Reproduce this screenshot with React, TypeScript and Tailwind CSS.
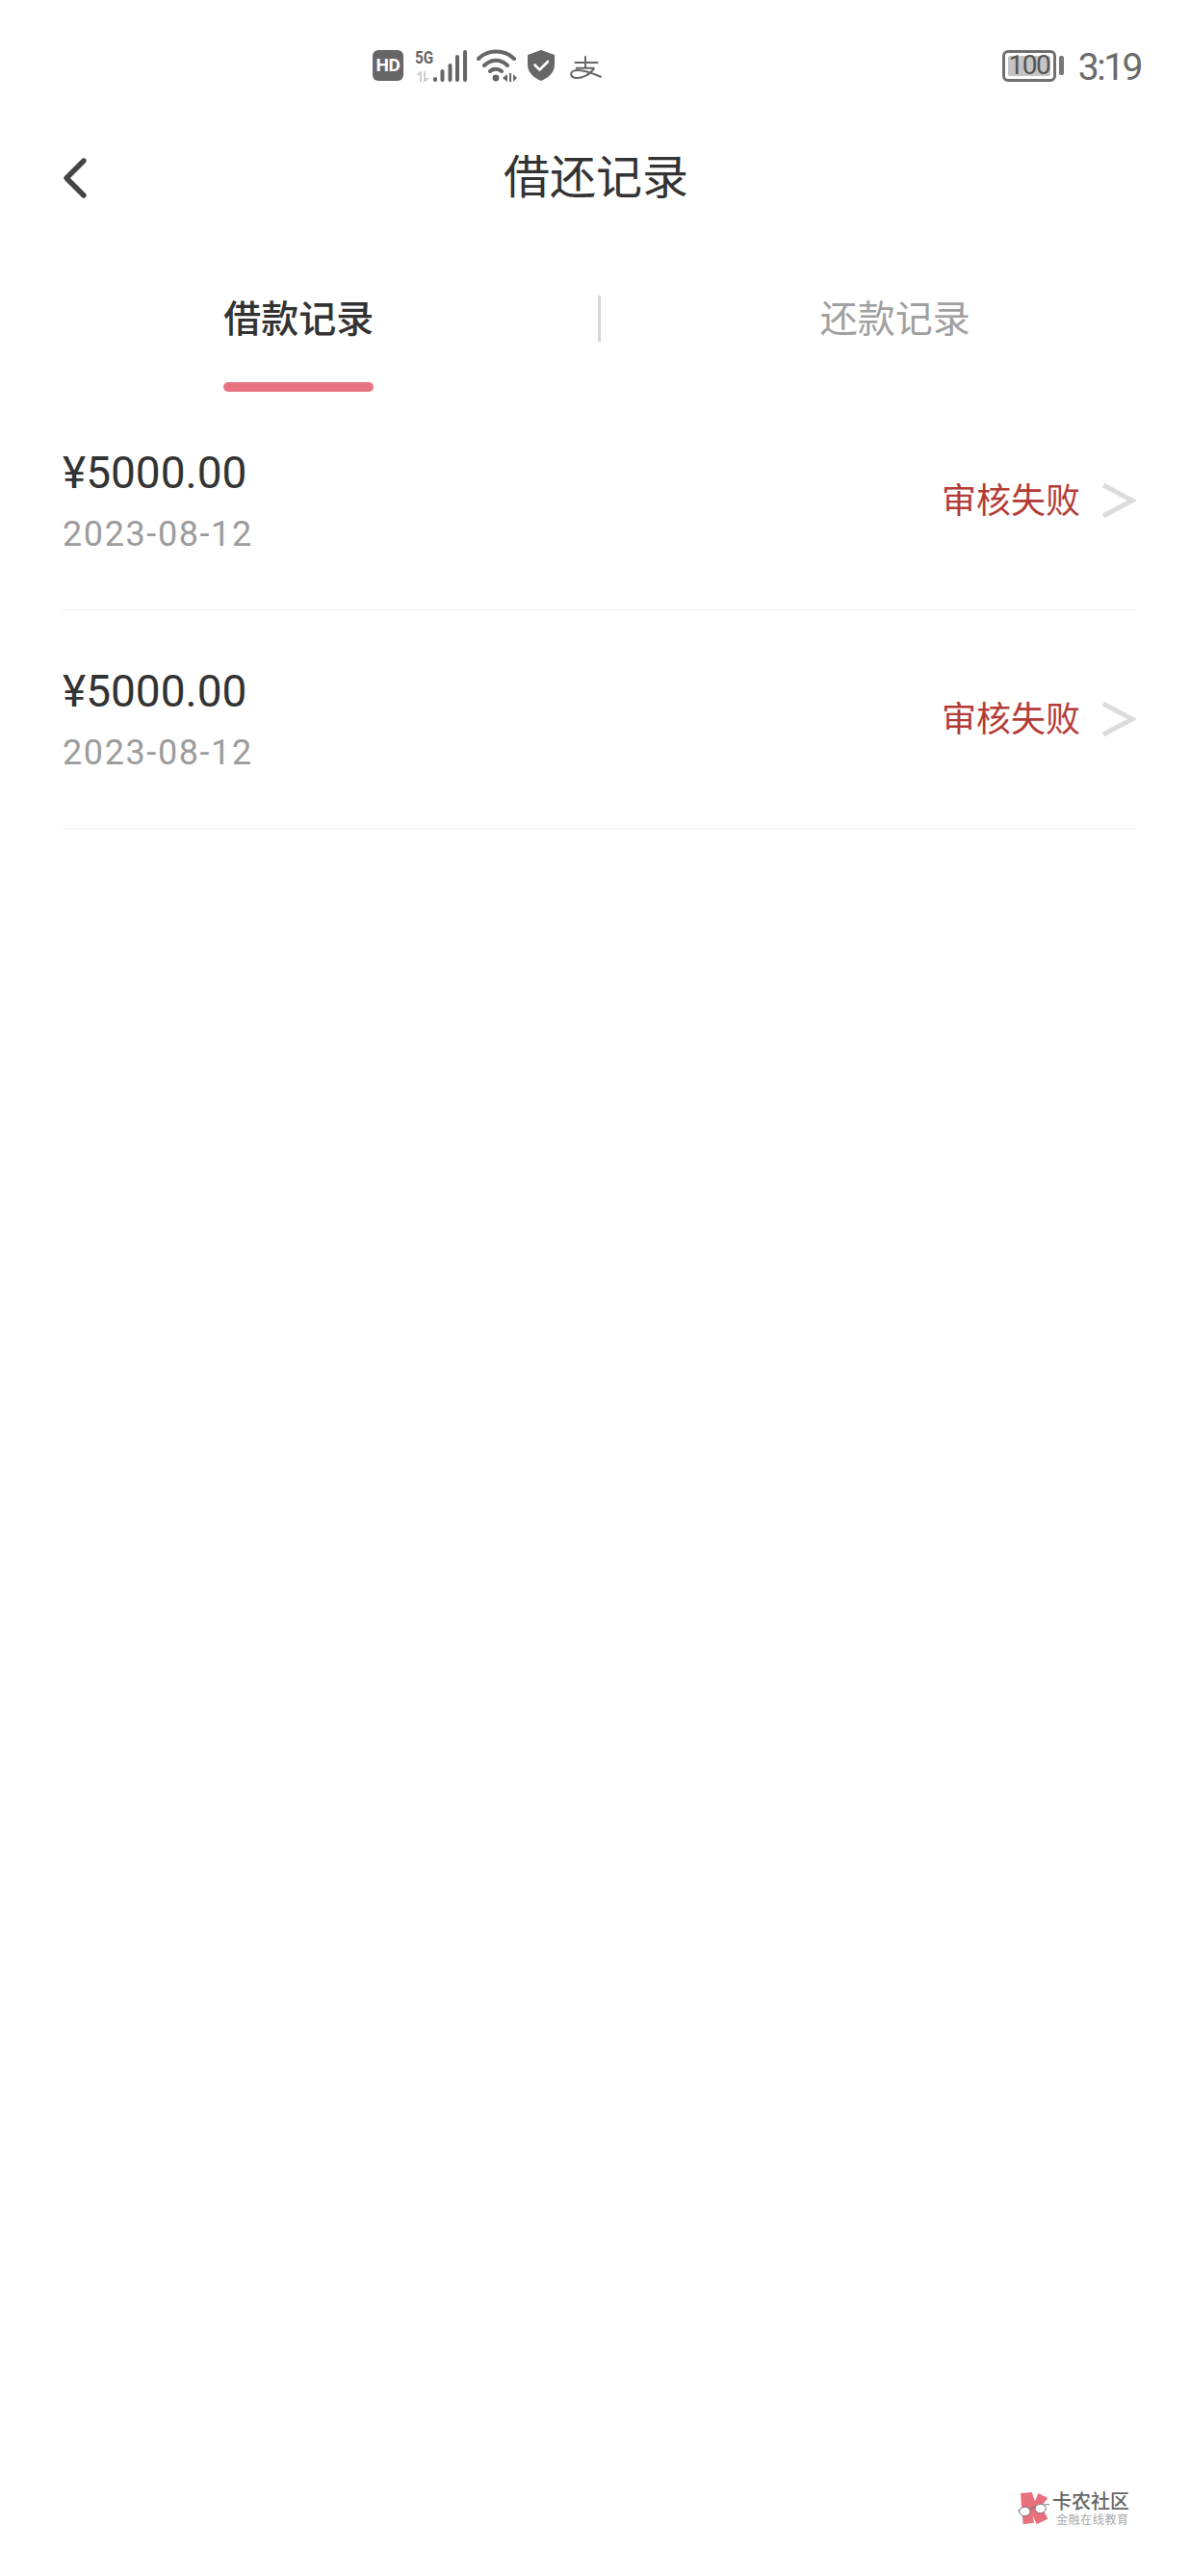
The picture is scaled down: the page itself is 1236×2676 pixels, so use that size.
import { ChevronLeft } from 'lucide-react'

const cjk = "font-['Roboto','Noto_Sans_CJK_SC',sans-serif]"

function SignalIcons() {
  return (
    <div className="relative ml-[12px] h-[34px] w-[56px]">
      <span className="absolute left-0 top-[1px] origin-top-left scale-x-[0.85] text-[18px] font-bold leading-[16px] text-[#666] font-['Roboto',sans-serif]">5G</span>
      <svg width="56" height="34" viewBox="0 0 56 34" className="absolute inset-0">
        {/* up/down arrows */}
        <path d="M5 34V27H1L5.5 23L7 23V34Z M9 23V34H10.5L15 30H11V23Z" fill="#cfcfcf" />
        {/* bars */}
        <rect x="19" y="29" width="4" height="5" rx="2" fill="#666" />
        <rect x="26.5" y="21" width="4" height="13" rx="2" fill="#666" />
        <rect x="34.5" y="15" width="4" height="19" rx="2" fill="#666" />
        <rect x="42" y="6" width="4" height="28" rx="2" fill="#666" />
        <rect x="50" y="1" width="4" height="33" rx="2" fill="#666" />
      </svg>
    </div>
  )
}

function WifiIcon() {
  return (
    <svg width="42" height="34" viewBox="0 0 42 34" fill="none" className="ml-[8px]">
      <path d="M2 10C12 0 29 0 39 10" stroke="#666" strokeWidth="4" strokeLinecap="round" />
      <path d="M8 17C15 10 25 10 32 17" stroke="#666" strokeWidth="4" strokeLinecap="round" />
      <path d="M14 23C17 20 23 20 26 23" stroke="#666" strokeWidth="4" strokeLinecap="round" />
      <circle cx="20" cy="30" r="3.4" fill="#666" />
      <path d="M27 30L32 26V34Z M34 25V34H36V25Z M38 26L42 30L38 34Z" fill="#666" />
    </svg>
  )
}

function ShieldIcon() {
  return (
    <svg width="28" height="32" viewBox="0 0 28 32" className="ml-[11px]">
      <path d="M14 0L28 5V15C28 24 21 29 14 32C7 29 0 24 0 15V5Z" fill="#666" />
      <path d="M7.5 15.5L12.5 20.5L21 12" fill="none" stroke="#fff" strokeWidth="2.6" strokeLinecap="round" strokeLinejoin="round" />
    </svg>
  )
}

function AlipayIcon() {
  return (
    <svg width="50" height="40" viewBox="0 0 150 120" fill="none" stroke="#666" strokeWidth="6" className="ml-[8px] mt-[4px]">
      <path d="M38 45H112 M72 25V62 M42 62H100" />
      <path d="M100 62C85 85 60 95 42 93C25 91 22 75 38 70C60 64 95 78 122 90" />
    </svg>
  )
}

function Battery() {
  return (
    <div className="flex items-center">
      <div className="flex h-[33px] w-[56px] items-center justify-center rounded-[6px] border-[3px] border-[#6f6f6f] p-[3px]">
        <div className="flex h-full w-full items-center justify-center rounded-[2px] bg-[#c4c4c4] text-[28px] leading-none tracking-[-1.5px] text-[#555] font-['Roboto',sans-serif]">
          100
        </div>
      </div>
      <div className="ml-[3px] h-[20px] w-[5px] rounded-[2px] bg-[#777]" />
    </div>
  )
}

function StatusBar() {
  return (
    <div className="flex h-[136px] items-center pl-[387px] pr-[51px]">
      <div className="flex h-[32px] w-[32px] items-center justify-center rounded-[6px] bg-[#666] text-[19px] font-bold tracking-[-0.5px] text-white font-['Roboto',sans-serif]">
        HD
      </div>
      <SignalIcons />
      <WifiIcon />
      <ShieldIcon />
      <AlipayIcon />
      <div className="flex-1" />
      <Battery />
      <span className="ml-[15px] mt-[4px] text-[39px] leading-none tracking-[-2.5px] text-[#6a6a6a] font-['Roboto',sans-serif]">3:19</span>
    </div>
  )
}

function Row() {
  return (
    <div className="flex h-[227px] items-center border-b border-[#f0f0f0]">
      <div className="flex-1 pb-[5px]">
        <div className={`text-[46px] leading-[64px] text-[#333] ${cjk}`}>¥5000.00</div>
        <div className="mt-[10px] text-[36px] leading-[44px] tracking-[1.6px] text-[#9c9c9c] font-['Roboto',sans-serif]">2023-08-12</div>
      </div>
      <span className={`pt-[2px] text-[36px] leading-none text-[#b43c36] ${cjk}`}>审核失败</span>
      <svg width="36" height="38" viewBox="0 0 36 38" fill="none" className="ml-[22px]">
        <path d="M2 3L32 19L2 35" stroke="#dcdcdc" strokeWidth="5" />
      </svg>
    </div>
  )
}

export default function App() {
  return (
    <div className="relative h-[2676px] w-full bg-white">
      <StatusBar />

      {/* title bar */}
      <div className="relative flex h-[98px] items-center justify-center">
        <ChevronLeft className="absolute left-[42px] text-[#444]" size={72} strokeWidth={1.8} />
        <h1 className={`ml-[2px] text-[48px] font-normal leading-none text-[#333] ${cjk}`}>借还记录</h1>
      </div>

      {/* tabs */}
      <div className="flex h-[173px] items-start pl-[4px]">
        <div className="flex h-full flex-1 flex-col items-center pr-[4px] pt-[73px]">
          <span className={`text-[39px] font-medium leading-[50px] text-[#333] ${cjk}`}>借款记录</span>
          <div className="mt-[40px] h-[10px] w-[156px] rounded-full bg-[#e87482]" />
        </div>
        <div className="mt-[73px] h-[48px] w-[3px] bg-[#d6d6d6]" />
        <div className="flex h-full flex-1 flex-col items-center pt-[73px]">
          <span className={`text-[39px] leading-[50px] text-[#a0a0a0] ${cjk}`}>还款记录</span>
        </div>
      </div>

      <div className="mx-[65px] w-[1115px]">
        <Row />
        <Row />
      </div>

      {/* watermark */}
      <div className="absolute left-[1050px] top-[2580px] flex items-start">
        <svg width="43" height="50" viewBox="0 0 129 150">
          <path d="M30 30L65 27L75 55L85 30L115 45L95 70L115 110L80 127L68 100L72 122L38 127L35 95Z" fill="#e8707c" />
          <path d="M22 85C40 72 55 75 60 80C70 75 85 65 120 65" fill="none" stroke="#777" strokeWidth="3" />
          <ellipse cx="43" cy="87" rx="17" ry="14" fill="#fff" stroke="#777" strokeWidth="3" />
          <ellipse cx="92" cy="78" rx="17" ry="14" fill="#fff" stroke="#777" strokeWidth="3" />
        </svg>
        <div className="mt-[8px] flex flex-col">
          <span className={`text-[20px] font-medium leading-[22px] text-[#666] ${cjk}`}>卡农社区</span>
          <span className={`ml-[4px] mt-[1px] text-[12px] leading-[14px] tracking-[0.6px] text-[#aaa] ${cjk}`}>金融在线教育</span>
        </div>
      </div>
    </div>
  )
}
